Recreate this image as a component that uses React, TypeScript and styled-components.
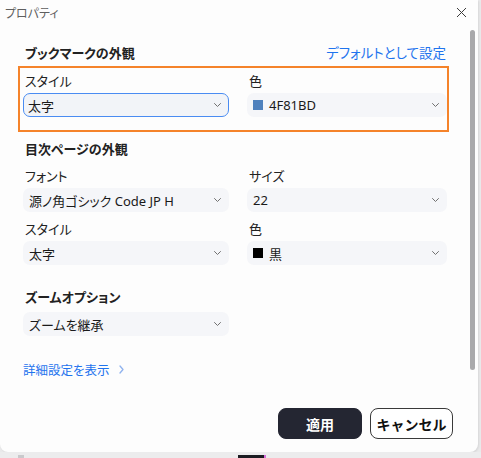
import React from "react";
import styled, { createGlobalStyle } from "styled-components";

const Global = createGlobalStyle`
  html, body { margin: 0; padding: 0; }
  body {
    background: #e9e9ea;
    font-family: "Noto Sans", "Noto Sans CJK JP", sans-serif;
    color: #1f1f1f;
    overflow: hidden;
  }
  * { box-sizing: border-box; }
`;

const Page = styled.div`
  width: 481px;
  height: 458px;
  display: flex;
  flex-direction: column;
`;

const Dialog = styled.div`
  width: 478px;
  height: 452px;
  background: #fdfdfd;
  border-radius: 0 0 8px 8px;
  display: flex;
  flex-direction: column;
  box-shadow: 1px 1px 2px rgba(0, 0, 0, 0.08);
  font-feature-settings: "palt";
`;

const TitleBar = styled.div`
  height: 24px;
  display: flex;
  align-items: center;
  justify-content: space-between;
  padding: 0 10px 0 5px;
`;

const Title = styled.span`
  font-size: 12px;
  color: #5f5f5f;
  font-family: "Noto Sans CJK JP", sans-serif;
`;

const CloseButton = styled.button`
  border: none;
  background: none;
  padding: 0;
  width: 14px;
  height: 14px;
  display: flex;
  align-items: center;
  justify-content: center;
  color: #444;
`;

const Body = styled.div`
  flex: 1;
  display: flex;
`;

const Main = styled.div`
  width: 449px;
  padding-left: 18px;
  display: flex;
  flex-direction: column;
`;

const ScrollThumb = styled.div`
  width: 5px;
  height: 340px;
  margin: 6px 0 0 21px;
  border-radius: 3px;
  background: #a9a9ab;
`;

const SectionHeader = styled.div<{ $mt: number; $pl?: number }>`
  height: 20px;
  margin-top: ${(p) => p.$mt}px;
  display: flex;
  align-items: center;
  justify-content: space-between;
  padding: 0 3px 0 ${(p) => p.$pl ?? 7}px;
`;

const Heading = styled.h3`
  margin: 0;
  font-size: 13px;
  font-weight: 700;
  color: #222;
  font-family: "Noto Sans CJK JP", sans-serif;
`;

const LinkText = styled.a<{ $size?: number }>`
  font-size: ${(p) => p.$size ?? 13}px;
  color: #1f74ee;
  text-decoration: none;
  font-family: "Noto Sans CJK JP", sans-serif;
  display: inline-flex;
  align-items: center;
  gap: 9px;
`;

const Highlight = styled.div`
  margin-top: 4px;
  border: 2px solid #f5832a;
  padding: 4px 0 13px 3px;
`;

const FieldGrid = styled.div<{ $pl?: number; $mt?: number }>`
  display: grid;
  grid-template-columns: 206px 200px;
  column-gap: 18px;
  row-gap: 8px;
  padding-left: ${(p) => p.$pl ?? 0}px;
  margin-top: ${(p) => p.$mt ?? 0}px;
`;

const Field = styled.div`
  display: flex;
  flex-direction: column;
  gap: 3px;
`;

const Label = styled.label`
  font-size: 13px;
  line-height: 18px;
  padding-left: 2px;
  color: #222;
  font-family: "Noto Sans CJK JP", sans-serif;
`;

const SelectBox = styled.div<{ $focused?: boolean }>`
  height: 24px;
  border-radius: 7px;
  border: 1px solid ${(p) => (p.$focused ? "#4a8cf2" : "transparent")};
  background: ${(p) => (p.$focused ? "#f2f4f8" : "#f5f6f9")};
  display: flex;
  align-items: center;
  padding: 0 7px 0 ${(p) => (p.$focused ? 4 : 5)}px;
  gap: 6px;
  font-size: 13px;
  color: #1a1a1a;
`;

const SelectValue = styled.span`
  flex: 1;
  white-space: nowrap;
`;

const Swatch = styled.span<{ $color: string }>`
  width: 10px;
  height: 10px;
  background: ${(p) => p.$color};
  flex-shrink: 0;
`;

const Footer = styled.div`
  display: flex;
  justify-content: flex-end;
  gap: 8px;
  padding: 0 25px 13px 0;
`;

const Button = styled.button<{ $primary?: boolean }>`
  height: 31px;
  width: ${(p) => (p.$primary ? 84 : 83)}px;
  border-radius: 8px;
  border: 1px solid ${(p) => (p.$primary ? "#242632" : "#3a3a3a")};
  background: ${(p) => (p.$primary ? "#242632" : "#ffffff")};
  color: ${(p) => (p.$primary ? "#ffffff" : "#111")};
  font-size: 14px;
  font-weight: 700;
  font-family: "Noto Sans CJK JP", sans-serif;
  padding: 0;
`;

const Backdrop = styled.div`
  flex: 1;
  position: relative;
  background: #ececed;
`;

const BackdropItem = styled.div<{ $left: number; $w: number; $color: string }>`
  position: absolute;
  top: 3px;
  left: ${(p) => p.$left}px;
  width: ${(p) => p.$w}px;
  height: 3px;
  background: ${(p) => p.$color};
`;

const Chevron = ({ size = 7, color = "#707070" }: { size?: number; color?: string }) => (
  <svg width={size} height={4} viewBox="0 0 7 4" fill="none">
    <path d="M0.5 0.5 L3.5 3.5 L6.5 0.5" stroke={color} strokeWidth="1" strokeLinecap="round" strokeLinejoin="round" />
  </svg>
);

const RightChevron = () => (
  <svg width="5" height="9" viewBox="0 0 5 9" fill="none">
    <path d="M1 1 L4 4.5 L1 8" stroke="#8fb2ee" strokeWidth="1.3" strokeLinecap="round" strokeLinejoin="round" />
  </svg>
);

const Select = ({ value, swatch, focused }: { value: string; swatch?: string; focused?: boolean }) => (
  <SelectBox $focused={focused}>
    {swatch && <Swatch $color={swatch} />}
    <SelectValue>{value}</SelectValue>
    <Chevron />
  </SelectBox>
);

export default function App() {
  return (
    <Page>
      <Global />
      <Dialog>
        <TitleBar>
          <Title>プロパティ</Title>
          <CloseButton aria-label="閉じる">
            <svg width="11" height="11" viewBox="0 0 11 11">
              <path d="M1 1 L10 10 M10 1 L1 10" stroke="#3c3c3c" strokeWidth="1" />
            </svg>
          </CloseButton>
        </TitleBar>
        <Body>
          <Main>
            <SectionHeader $mt={18}>
              <Heading>ブックマークの外観</Heading>
              <LinkText href="#" $size={13.5}>デフォルトとして設定</LinkText>
            </SectionHeader>
            <Highlight>
              <FieldGrid>
                <Field>
                  <Label>スタイル</Label>
                  <Select value="太字" focused />
                </Field>
                <Field>
                  <Label>色</Label>
                  <Select value="4F81BD" swatch="#4f81bd" />
                </Field>
              </FieldGrid>
            </Highlight>

            <SectionHeader $mt={6}>
              <Heading>目次ページの外観</Heading>
            </SectionHeader>
            <FieldGrid $pl={5} $mt={9}>
              <Field>
                <Label>フォント</Label>
                <Select value="源ノ角ゴシック Code JP H" />
              </Field>
              <Field>
                <Label>サイズ</Label>
                <Select value="22" />
              </Field>
              <Field>
                <Label>スタイル</Label>
                <Select value="太字" />
              </Field>
              <Field>
                <Label>色</Label>
                <Select value="黒" swatch="#000000" />
              </Field>
            </FieldGrid>

            <SectionHeader $mt={21}>
              <Heading>ズームオプション</Heading>
            </SectionHeader>
            <FieldGrid $pl={5} $mt={6}>
              <Select value="ズームを継承" />
            </FieldGrid>

            <SectionHeader $mt={23} $pl={5}>
              <LinkText href="#" $size={12.5}>
                詳細設定を表示
                <RightChevron />
              </LinkText>
            </SectionHeader>
          </Main>
          <ScrollThumb />
        </Body>
        <Footer>
          <Button $primary>適用</Button>
          <Button>キャンセル</Button>
        </Footer>
      </Dialog>
      <Backdrop>
        <BackdropItem $left={18} $w={6} $color="#c9c9cc" />
        <BackdropItem $left={238} $w={26} $color="#1c1c22" />
        <BackdropItem $left={264} $w={2} $color="#d46bd8" />
      </Backdrop>
    </Page>
  );
}
